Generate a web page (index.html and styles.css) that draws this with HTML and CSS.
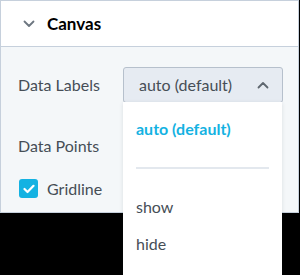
FILE: index.html
```html
<!DOCTYPE html>
<html lang="en">

<head>
    <meta charset="UTF-8">
    <meta name="viewport" content="width=device-width, initial-scale=1.0">
    <title>Canvas</title>
    <link rel="stylesheet" href="styles.css">
</head>

<body>
    <section class="panel">
        <header class="panel-header">
            <svg class="chevron" width="12" height="8" viewBox="0 0 12 8">
                <path d="M1.5 1.5 L6 6 L10.5 1.5" fill="none" stroke="#6d7680" stroke-width="1.8" stroke-linecap="round" stroke-linejoin="round"/>
            </svg>
            <h2>Canvas</h2>
        </header>
        <div class="panel-body">
            <div class="row">
                <span class="label">Data Labels</span>
                <div class="select-wrap">
                    <button class="select" type="button">
                        <span>auto (default)</span>
                        <svg width="12" height="8" viewBox="0 0 12 8">
                            <path d="M1.5 6.5 L6 2 L10.5 6.5" fill="none" stroke="#5f6770" stroke-width="1.8" stroke-linecap="round" stroke-linejoin="round"/>
                        </svg>
                    </button>
                    <ul class="menu">
                        <li class="active">auto (default)</li>
                        <li class="divider"></li>
                        <li>show</li>
                        <li>hide</li>
                    </ul>
                </div>
            </div>
            <div class="row row-points">
                <span class="label">Data Points</span>
            </div>
            <label class="row check">
                <span class="box">
                    <svg width="12" height="10" viewBox="0 0 12 10">
                        <path d="M1.5 5 L4.5 8 L10.5 1.8" fill="none" stroke="#fff" stroke-width="2.2" stroke-linecap="round" stroke-linejoin="round"/>
                    </svg>
                </span>
                <span class="label">Gridline</span>
            </label>
        </div>
    </section>
</body>
</html>
```

FILE: styles.css
```css
body {
    margin: 0;
    background-color: #000;
    font-family: Lato, "Open Sans", sans-serif;
    color: #464e56;
    height: 275px;
    overflow: hidden;
}
.panel {
    width: 297px;
    border: 1px solid #c6d0dc;
    background-color: #f4f7f9;
}
.panel-header {
    display: flex;
    align-items: center;
    height: 45px;
    padding-left: 22px;
    background-color: #fff;
    border-bottom: 1px solid #c6d0dc;
}
.chevron {
    margin-right: 12px;
}
.panel-header h2 {
    margin: 0;
    font-size: 17px;
    font-weight: 700;
    color: #000;
}
.panel-body {
    padding: 20px 0 6px 17px;
}
.row {
    display: flex;
    align-items: center;
    height: 35px;
}
.row + .row {
    margin-top: 8px;
}
.row.row-points {
    margin-top: 26px;
}
.label {
    font-size: 16px;
    width: 105px;
}
.select-wrap {
    position: relative;
}
.select {
    display: flex;
    align-items: center;
    justify-content: space-between;
    width: 160px;
    height: 36px;
    padding: 0 13px 0 15px;
    border: 1px solid #b6c0cc;
    border-radius: 3px;
    background-color: #e6ebf2;
    font-family: inherit;
    font-size: 16px;
    color: #464e56;
}
.menu {
    position: absolute;
    top: 35px;
    left: 0;
    width: 159px;
    margin: 0;
    padding: 8px 0 13px 0;
    list-style: none;
    background-color: #fff;
    box-shadow: 0 1px 4px rgba(30, 40, 60, 0.12);
}
.menu li {
    padding: 9px 13px;
    font-size: 16px;
    line-height: 19px;
}
.menu li.active {
    color: #14b2e2;
    font-weight: 700;
}
.menu li.divider {
    height: 2px;
    padding: 0;
    margin: 20px 13px 19px 13px;
    background-color: #e3e8ee;
}
.check .box {
    display: flex;
    align-items: center;
    justify-content: center;
    width: 19px;
    height: 19px;
    margin-left: 1px;
    margin-right: 9px;
    border-radius: 3px;
    background-color: #14b2e2;
}
.check .label {
    width: auto;
}
```
